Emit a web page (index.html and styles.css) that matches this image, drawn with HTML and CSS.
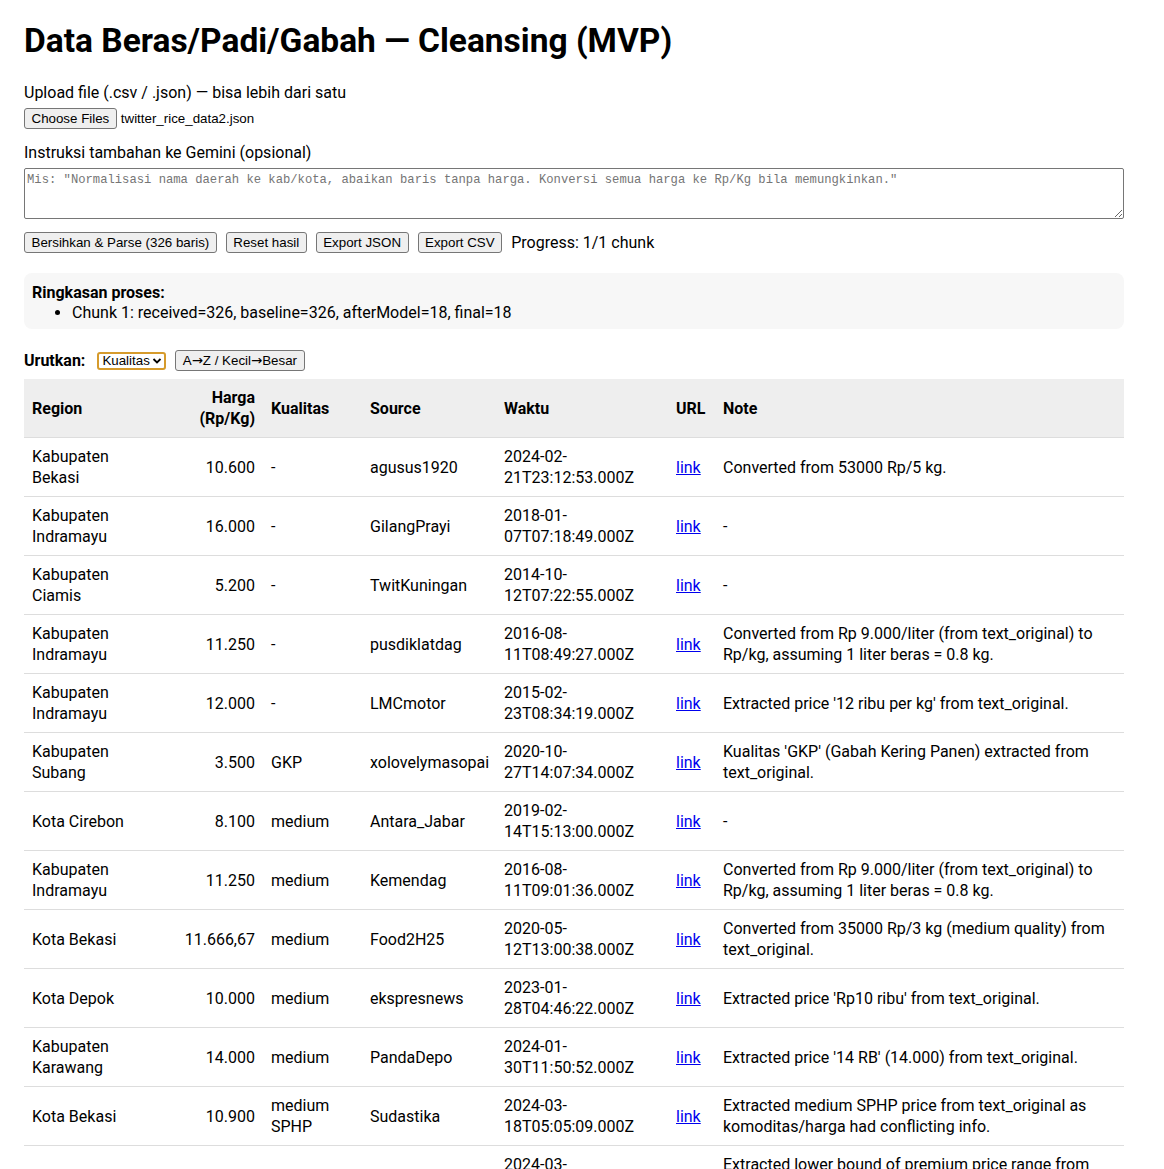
FILE: index.html
```html
<!DOCTYPE html>
<html lang="id">
<head>
<meta charset="utf-8">
<title>Data Beras/Padi/Gabah — Cleansing (MVP)</title>
<link rel="stylesheet" href="styles.css">
</head>
<body>
<div class="app">
  <h1 class="title">Data Beras/Padi/Gabah — Cleansing (MVP)</h1>

  <div class="field">
    <div class="label">Upload file (.csv / .json) — bisa lebih dari satu</div>
    <div class="file-row">
      <button class="btn" type="button">Choose Files</button>
      <span class="file-name">twitter_rice_data2.json</span>
    </div>
  </div>

  <div class="field">
    <div class="label">Instruksi tambahan ke Gemini (opsional)</div>
    <textarea class="instr" placeholder="Mis: &quot;Normalisasi nama daerah ke kab/kota, abaikan baris tanpa harga. Konversi semua harga ke Rp/Kg bila memungkinkan.&quot;"></textarea>
  </div>

  <div class="actions">
    <button class="btn" type="button">Bersihkan &amp; Parse (326 baris)</button>
    <button class="btn" type="button">Reset hasil</button>
    <button class="btn" type="button">Export JSON</button>
    <button class="btn" type="button">Export CSV</button>
    <span class="progress">Progress: 1/1 chunk</span>
  </div>

  <div class="summary">
    <div class="summary-title">Ringkasan proses:</div>
    <ul class="summary-list">
      <li>Chunk 1: received=326, baseline=326, afterModel=18, final=18</li>
    </ul>
  </div>

  <div class="sort-row">
    <span class="sort-label">Urutkan:</span>
    <span class="select">Kualitas<svg class="chev" viewBox="0 0 10 10" width="10" height="10"><path d="M1.5 3 L5 6.5 L8.5 3" fill="none" stroke="#000" stroke-width="1.8"/></svg></span>
    <button class="btn btn-sort" type="button">A<span class="arrow">→</span>Z / Kecil<span class="arrow">→</span>Besar</button>
  </div>

  <table class="data">
    <colgroup>
      <col class="c-region"><col class="c-harga"><col class="c-kual"><col class="c-src"><col class="c-time"><col class="c-url"><col class="c-note">
    </colgroup>
    <thead>
      <tr><th>Region</th><th class="num">Harga (Rp/Kg)</th><th>Kualitas</th><th>Source</th><th>Waktu</th><th>URL</th><th>Note</th></tr>
    </thead>
    <tbody>
      <tr><td>Kabupaten Bekasi</td><td class="num">10.600</td><td>-</td><td>agusus1920</td><td>2024-02-21T23:12:53.000Z</td><td><a href="#">link</a></td><td>Converted from 53000 Rp/5 kg.</td></tr>
      <tr><td>Kabupaten Indramayu</td><td class="num">16.000</td><td>-</td><td>GilangPrayi</td><td>2018-01-07T07:18:49.000Z</td><td><a href="#">link</a></td><td>-</td></tr>
      <tr><td>Kabupaten Ciamis</td><td class="num">5.200</td><td>-</td><td>TwitKuningan</td><td>2014-10-12T07:22:55.000Z</td><td><a href="#">link</a></td><td>-</td></tr>
      <tr><td>Kabupaten Indramayu</td><td class="num">11.250</td><td>-</td><td>pusdiklatdag</td><td>2016-08-11T08:49:27.000Z</td><td><a href="#">link</a></td><td>Converted from Rp 9.000/liter (from text_original) to Rp/kg, assuming 1 liter beras = 0.8 kg.</td></tr>
      <tr><td>Kabupaten Indramayu</td><td class="num">12.000</td><td>-</td><td>LMCmotor</td><td>2015-02-23T08:34:19.000Z</td><td><a href="#">link</a></td><td>Extracted price '12 ribu per kg' from text_original.</td></tr>
      <tr><td>Kabupaten Subang</td><td class="num">3.500</td><td>GKP</td><td>xolovelymasopai</td><td>2020-10-27T14:07:34.000Z</td><td><a href="#">link</a></td><td>Kualitas 'GKP' (Gabah Kering Panen) extracted from text_original.</td></tr>
      <tr><td>Kota Cirebon</td><td class="num">8.100</td><td>medium</td><td>Antara_Jabar</td><td>2019-02-14T15:13:00.000Z</td><td><a href="#">link</a></td><td>-</td></tr>
      <tr><td>Kabupaten Indramayu</td><td class="num">11.250</td><td>medium</td><td>Kemendag</td><td>2016-08-11T09:01:36.000Z</td><td><a href="#">link</a></td><td>Converted from Rp 9.000/liter (from text_original) to Rp/kg, assuming 1 liter beras = 0.8 kg.</td></tr>
      <tr><td>Kota Bekasi</td><td class="num">11.666,67</td><td>medium</td><td>Food2H25</td><td>2020-05-12T13:00:38.000Z</td><td><a href="#">link</a></td><td>Converted from 35000 Rp/3 kg (medium quality) from text_original.</td></tr>
      <tr><td>Kota Depok</td><td class="num">10.000</td><td>medium</td><td>ekspresnews</td><td>2023-01-28T04:46:22.000Z</td><td><a href="#">link</a></td><td>Extracted price 'Rp10 ribu' from text_original.</td></tr>
      <tr><td>Kabupaten Karawang</td><td class="num">14.000</td><td>medium</td><td>PandaDepo</td><td>2024-01-30T11:50:52.000Z</td><td><a href="#">link</a></td><td>Extracted price '14 RB' (14.000) from text_original.</td></tr>
      <tr><td>Kota Bekasi</td><td class="num">10.900</td><td>medium SPHP</td><td>Sudastika</td><td>2024-03-18T05:05:09.000Z</td><td><a href="#">link</a></td><td>Extracted medium SPHP price from text_original as komoditas/harga had conflicting info.</td></tr>
      <tr><td>Kota Bekasi</td><td class="num">13.500</td><td>premium</td><td>Sudastika</td><td>2024-03-18T05:05:09.000Z</td><td><a href="#">link</a></td><td>Extracted lower bound of premium price range from text_original.</td></tr>
    </tbody>
  </table>
</div>
</body>
</html>
```

FILE: styles.css
```css
* { box-sizing: border-box; }
body {
  margin: 0;
  padding: 20px 24px 16px;
  font-family: Roboto, "Noto Sans", sans-serif;
  font-size: 16px;
  line-height: 21px;
  color: #000;
  background: #fff;
}
.app { max-width: 1100px; }
.title {
  font-size: 33.5px;
  line-height: 42px;
  font-weight: 700;
  margin: 0 0 20px;
}
.field { margin-bottom: 13px; }
.label { margin-bottom: 5px; }
.file-row { display: flex; align-items: center; gap: 4px; }
.file-name { font-family: "Liberation Sans", Arial, sans-serif; font-size: 13.33px; }
.btn {
  font-family: "Liberation Sans", Arial, sans-serif;
  font-size: 13.33px;
  line-height: 15px;
  padding: 2px 6.5px;
  background: #efefef;
  border: 1px solid #767676;
  border-radius: 3px;
  color: #000;
}
.instr {
  display: block;
  width: 100%;
  height: 51px;
  padding: 4px 2px 2px;
  border: 1px solid #767676;
  border-radius: 2px;
  font-family: "Liberation Mono", monospace;
  font-size: 12.2px;
  resize: vertical;
}
.instr::placeholder { color: #757575; }
.actions { display: flex; align-items: center; gap: 9px; margin-top: 11px; }
.summary {
  margin-top: 20px;
  background: #f7f7f7;
  border-radius: 8px;
  padding: 10px 8px 6px;
  line-height: 20px;
}
.summary-title { font-weight: 700; }
.summary-list { margin: 0; padding-left: 40px; }
.sort-row { display: flex; align-items: center; margin-top: 21px; }
.sort-label { font-weight: 700; margin-right: 12px; }
.select {
  display: inline-flex;
  align-items: center;
  gap: 2px;
  height: 18px;
  padding: 0 2px 0 3px;
  border: 2px solid #d69b2c;
  border-radius: 3px;
  font-family: "Liberation Sans", Arial, sans-serif;
  font-size: 13.33px;
  margin-right: 9px;
}
.chev { display: block; }
.btn-sort { padding: 2px 7px; }
.arrow { font-family: "DejaVu Sans", sans-serif; font-size: 13.33px; }
.data {
  width: 100%;
  margin-top: 8px;
  border-collapse: collapse;
  table-layout: fixed;
}
.c-region { width: 138px; }
.c-harga { width: 101px; }
.c-kual { width: 99px; }
.c-src { width: 134px; }
.c-time { width: 172px; }
.c-url { width: 47px; }
.c-note { width: 409px; }
.data th, .data td {
  padding: 8px;
  text-align: left;
  vertical-align: middle;
  border-bottom: 1px solid #ddd;
}
.data th { background: #eee; font-weight: 700; }
.data .num { text-align: right; }
.data a { color: #0000ee; }
```
